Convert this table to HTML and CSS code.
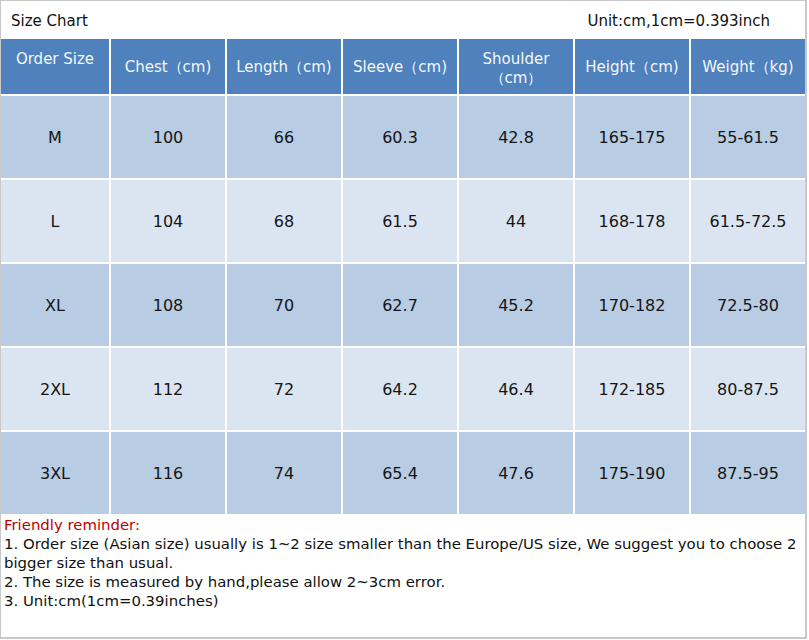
FILE: index.html
```html
<!DOCTYPE html>
<html>
<head>
<meta charset="utf-8">
<link rel="stylesheet" href="styles.css">
</head>
<body>
<div class="sheet">
  <div class="titlebar">
    <span class="title">Size Chart</span>
    <span class="unit">Unit:cm,1cm=0.393inch</span>
  </div>
  <div class="grid">
    <div class="hd hd-top">Order Size</div>
    <div class="hd">Chest（cm)</div>
    <div class="hd">Length（cm)</div>
    <div class="hd">Sleeve（cm)</div>
    <div class="hd hd-two">Shoulder<br>（cm）</div>
    <div class="hd">Height（cm)</div>
    <div class="hd">Weight（kg)</div>

    <div class="c odd">M</div><div class="c odd">100</div><div class="c odd">66</div><div class="c odd">60.3</div><div class="c odd">42.8</div><div class="c odd">165-175</div><div class="c odd">55-61.5</div>
    <div class="c even">L</div><div class="c even">104</div><div class="c even">68</div><div class="c even">61.5</div><div class="c even">44</div><div class="c even">168-178</div><div class="c even">61.5-72.5</div>
    <div class="c odd">XL</div><div class="c odd">108</div><div class="c odd">70</div><div class="c odd">62.7</div><div class="c odd">45.2</div><div class="c odd">170-182</div><div class="c odd">72.5-80</div>
    <div class="c even">2XL</div><div class="c even">112</div><div class="c even">72</div><div class="c even">64.2</div><div class="c even">46.4</div><div class="c even">172-185</div><div class="c even">80-87.5</div>
    <div class="c odd">3XL</div><div class="c odd">116</div><div class="c odd">74</div><div class="c odd">65.4</div><div class="c odd">47.6</div><div class="c odd">175-190</div><div class="c odd">87.5-95</div>
  </div>
  <div class="notes">
    <div class="remind">Friendly reminder:</div>
    <div>1. Order size (Asian size) usually is 1~2 size smaller than the Europe/US size, We suggest you to choose 2 bigger size than usual.</div>
    <div>2. The size is measured by hand,please allow 2~3cm error.</div>
    <div>3. Unit:cm(1cm=0.39inches)</div>
  </div>
</div>
</body>
</html>
```
FILE: styles.css
```css
html, body {
  margin: 0;
  padding: 0;
  background: #ffffff;
}
.sheet {
  width: 804px;
  height: 636px;
  border: 1px solid #c8c8c8;
  border-right-width: 2px;
  border-bottom-width: 2px;
  display: flex;
  flex-direction: column;
  font-family: "DejaVu Sans", Verdana, sans-serif;
  color: #111;
}
.titlebar {
  height: 37px;
  flex: none;
  display: flex;
  justify-content: space-between;
  align-items: center;
  padding: 1px 35px 0 10px;
  font-size: 15px;
}
.grid {
  display: grid;
  grid-template-columns: 108px repeat(6, 114px);
  grid-template-rows: 55px repeat(5, 82px);
  column-gap: 2px;
  row-gap: 2px;
  background: #ffffff;
}
.hd {
  background: #4f81bd;
  color: #f4f7fb;
  font-size: 15px;
  display: flex;
  align-items: center;
  justify-content: center;
  text-align: center;
  line-height: 19px;
  padding-top: 1px;
}
.hd-top {
  align-items: flex-start;
  padding-top: 11px;
}
.hd-two {
  padding-top: 5px;
}
.c {
  display: flex;
  align-items: center;
  justify-content: center;
  font-size: 16px;
  color: #151515;
}
.odd { background: #b8cce4; }
.even { background: #dbe5f1; }
.notes {
  padding: 2px 2px 0 3px;
  font-size: 14.9px;
  line-height: 19px;
  color: #111;
}
.remind {
  color: #c00000;
}
```
